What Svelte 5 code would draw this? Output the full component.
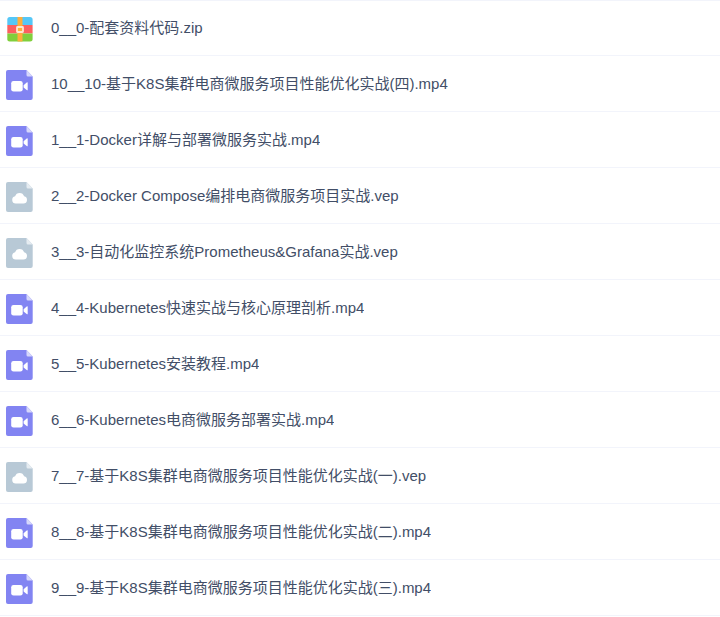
<script lang="ts">
  /**
   * FileList — one row per shared file, with an icon for its type.
   */
  type FileKind = 'zip' | 'video' | 'cloud';

  interface FileEntry {
    name: string;
    kind: FileKind;
  }

  const KIND_BY_EXT: Record<string, FileKind> = {
    zip: 'zip',
    mp4: 'video',
    vep: 'cloud',
  };

  const NAMES = [
    '0__0-配套资料代码.zip',
    '10__10-基于K8S集群电商微服务项目性能优化实战(四).mp4',
    '1__1-Docker详解与部署微服务实战.mp4',
    '2__2-Docker Compose编排电商微服务项目实战.vep',
    '3__3-自动化监控系统Prometheus&Grafana实战.vep',
    '4__4-Kubernetes快速实战与核心原理剖析.mp4',
    '5__5-Kubernetes安装教程.mp4',
    '6__6-Kubernetes电商微服务部署实战.mp4',
    '7__7-基于K8S集群电商微服务项目性能优化实战(一).vep',
    '8__8-基于K8S集群电商微服务项目性能优化实战(二).mp4',
    '9__9-基于K8S集群电商微服务项目性能优化实战(三).mp4',
  ];

  function kindOf(name: string): FileKind {
    const ext = name.split('.').pop() ?? '';
    return KIND_BY_EXT[ext] ?? 'cloud';
  }

  const files: FileEntry[] = NAMES.map((name) => ({ name, kind: kindOf(name) }));
</script>

<ul class="file-list">
  {#each files as file}
    <li class="file-row">
      <svg class="icon" viewBox="0 0 28 30" aria-hidden="true">
        {#if file.kind === 'zip'}
          <path d="M4 3h20a2.600 2.600 0 0 1 2.600 2.600V11H1.300V5.600A2.600 2.600 0 0 1 4 3z" fill="#55c7f7" />
          <path d="M1.300 11h25.300v8.500H1.300z" fill="#fc5f5f" />
          <path d="M1.300 19.500h25.300v5.100A2.600 2.600 0 0 1 24 27.500H4a2.600 2.600 0 0 1-2.700-2.900z" fill="#80cf3c" />
          <path d="M11.500 3h5v24.500h-5z" fill="#ffae3b" />
          <rect x="11" y="13" width="6" height="5" rx=".5" fill="#ffae3b" stroke="#ffe6cc" stroke-width="1.800" />
        {:else}
          <path
            d="M2 0h18.500l6.200 6.500V28a2 2 0 0 1-2 2H2a2 2 0 0 1-2-2V2a2 2 0 0 1 2-2z"
            fill={file.kind === 'video' ? '#8284f2' : '#b8c9d6'}
          />
          <path
            d="M20.500 0l6.200 6.500h-4.700a1.500 1.500 0 0 1-1.500-1.500z"
            fill={file.kind === 'video' ? '#d6d7fb' : '#e5ecf1'}
          />
          {#if file.kind === 'video'}
            <rect x="5.200" y="11" width="11.500" height="10.600" rx="2.300" fill="#fff" />
            <path d="M17.600 15.200l3.100-2.700q1-.7 1 .4v6.800q0 1.100-1 .4l-3.100-2.700z" fill="#fff" />
          {:else}
            <path d="M9.700 21.600a3.700 3.700 0 0 1-.6-7.300 4.700 4.700 0 0 1 9 0 3.700 3.700 0 0 1-.6 7.300z" fill="#fff" />
          {/if}
        {/if}
      </svg>
      <a class="name" href="#file" title={file.name}>{file.name}</a>
    </li>
  {/each}
</ul>

<style>
  :global(body) {
    margin: 0;
    background: #fff;
  }

  .file-list {
    margin: 0;
    padding: 0;
    list-style: none;
    font-family: 'Liberation Sans', 'Noto Sans CJK SC', sans-serif;
    font-size: 15px;
    line-height: 20px;
    color: #424e67;
  }

  .file-row {
    display: flex;
    align-items: center;
    gap: 17px;
    box-sizing: border-box;
    height: 56px;
    padding: 2px 6px 0;
    border-bottom: 1px solid #f2f4fb;
  }
  .file-row:first-child {
    border-top: 1px solid #f2f4fb;
  }

  .icon {
    width: 28px;
    height: 30px;
    flex-shrink: 0;
  }

  .name {
    min-width: 0;
    padding-bottom: 2px;
    color: inherit;
    text-decoration: none;
    white-space: nowrap;
    overflow: hidden;
    text-overflow: ellipsis;
  }
</style>
